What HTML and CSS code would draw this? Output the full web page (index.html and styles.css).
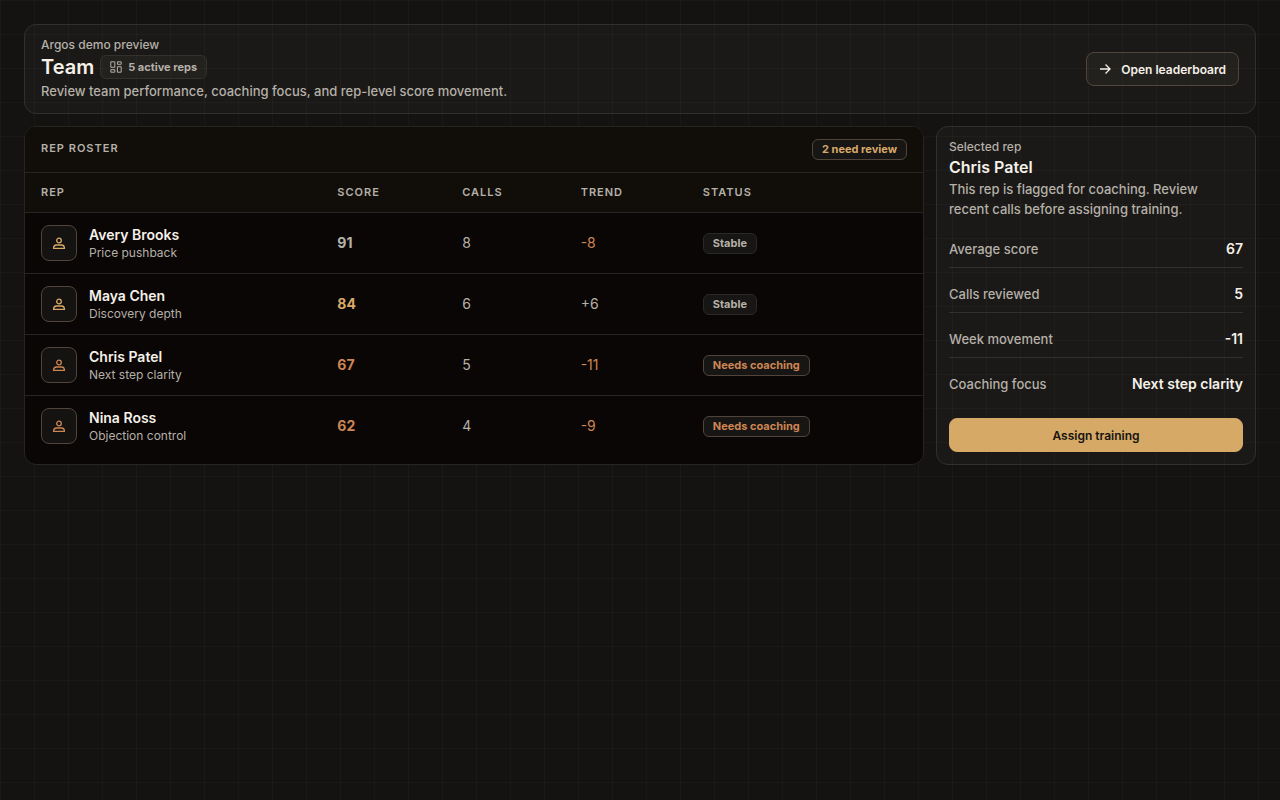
FILE: index.html
```html
<!DOCTYPE html>
<html lang="en">
<head>
  <meta charset="UTF-8" />
  <meta name="viewport" content="width=device-width, initial-scale=1.0" />
  <title>Team – Argos</title>
  <link rel="stylesheet" href="styles.css">
</head>
<body>
  <svg class="sprite" aria-hidden="true">
    <symbol id="icon-user" viewBox="0 0 14 14">
      <circle cx="7" cy="4.5" r="2.3" />
      <path d="M4.5 9h5c1.8 0 2.9 1 2.9 3.3H1.6C1.6 10 2.7 9 4.5 9z" />
    </symbol>
  </svg>

  <header class="card page-header">
    <div>
      <div class="eyebrow">Argos demo preview</div>
      <div class="title-row">
        <h1>Team</h1>
        <span class="count">
          <svg viewBox="0 0 12 12" width="12" height="12"><path d="M.8.8h4v5.500h-4zM7.400.8h3.800v2.500H7.400zM7.400 5.700h3.800v5.500H7.400zM.8 8.700h4v2.500h-4z" /></svg>
          5 active reps
        </span>
      </div>
      <p>Review team performance, coaching focus, and rep-level score movement.</p>
    </div>
    <button type="button" class="btn">
      <svg viewBox="0 0 12 12" width="12" height="12"><path d="M1 6h10M6.5 1.5L11 6l-4.500 4.500" /></svg>
      Open leaderboard
    </button>
  </header>

  <main class="layout">
    <section class="roster">
      <div class="roster-header">
        <h2>Rep roster</h2>
        <span class="badge gold">2 need review</span>
      </div>
      <table>
        <thead>
          <tr>
            <th class="col-rep">Rep</th>
            <th class="col-score">Score</th>
            <th class="col-calls">Calls</th>
            <th class="col-trend">Trend</th>
            <th>Status</th>
          </tr>
        </thead>
        <tbody>
          <tr>
            <td>
              <div class="rep">
                <span class="avatar gold"><svg width="14" height="14"><use href="#icon-user" /></svg></span>
                <div><div class="name">Avery Brooks</div><div class="focus">Price pushback</div></div>
              </div>
            </td>
            <td class="score">91</td>
            <td>8</td>
            <td class="orange">-8</td>
            <td><span class="badge stable">Stable</span></td>
          </tr>
          <tr>
            <td>
              <div class="rep">
                <span class="avatar gold"><svg width="14" height="14"><use href="#icon-user" /></svg></span>
                <div><div class="name">Maya Chen</div><div class="focus">Discovery depth</div></div>
              </div>
            </td>
            <td class="score gold">84</td>
            <td>6</td>
            <td>+6</td>
            <td><span class="badge stable">Stable</span></td>
          </tr>
          <tr>
            <td>
              <div class="rep">
                <span class="avatar orange"><svg width="14" height="14"><use href="#icon-user" /></svg></span>
                <div><div class="name">Chris Patel</div><div class="focus">Next step clarity</div></div>
              </div>
            </td>
            <td class="score orange">67</td>
            <td>5</td>
            <td class="orange">-11</td>
            <td><span class="badge orange">Needs coaching</span></td>
          </tr>
          <tr>
            <td>
              <div class="rep">
                <span class="avatar orange"><svg width="14" height="14"><use href="#icon-user" /></svg></span>
                <div><div class="name">Nina Ross</div><div class="focus">Objection control</div></div>
              </div>
            </td>
            <td class="score orange">62</td>
            <td>4</td>
            <td class="orange">-9</td>
            <td><span class="badge orange">Needs coaching</span></td>
          </tr>
        </tbody>
      </table>
    </section>

    <aside class="card detail">
      <div class="eyebrow">Selected rep</div>
      <h2>Chris Patel</h2>
      <p>This rep is flagged for coaching. Review recent calls before assigning training.</p>
      <dl>
        <div><dt>Average score</dt><dd>67</dd></div>
        <div><dt>Calls reviewed</dt><dd>5</dd></div>
        <div><dt>Week movement</dt><dd>-11</dd></div>
        <div><dt>Coaching focus</dt><dd>Next step clarity</dd></div>
      </dl>
      <button type="button" class="btn btn-primary">Assign training</button>
    </aside>
  </main>
</body>
</html>
```

FILE: styles.css
```css
* {
  box-sizing: border-box;
}
body {
  margin: 0;
  min-height: 100vh;
  padding: 24px;
  font-family: Inter, sans-serif;
  font-size: 14px;
  line-height: 20px;
  color: #b5b0a8;
  background-color: #141311;
  background-image:
    linear-gradient(to right, rgba(255,255,255,0.025) 1px, transparent 1px),
    linear-gradient(to bottom, rgba(255,255,255,0.025) 1px, transparent 1px);
  background-size: 34px 34px;
}
h1, h2, p, dl, dd {
  margin: 0;
}
svg {
  fill: none;
  stroke: currentColor;
  stroke-width: 1.3;
  flex: none;
}
.sprite {
  display: none;
}
.card {
  border: 1px solid #31302d;
  border-radius: 12px;
  background: rgba(255,255,255,0.028);
}
.card p,
dt {
  font-size: 13px;
  font-weight: 500;
}
.eyebrow {
  font-size: 12px;
  line-height: 16px;
  font-weight: 500;
}
.gold {
  color: #d9aa69;
}
.orange {
  color: #cd8554;
}

/* header */
.page-header {
  display: flex;
  align-items: center;
  justify-content: space-between;
  gap: 16px;
  padding: 12px 16px;
  margin-bottom: 12px;
}
.title-row {
  display: flex;
  align-items: center;
  gap: 6px;
}
h1 {
  font-size: 20px;
  line-height: 28px;
  font-weight: 600;
  color: #f5f0e8;
}
.count {
  display: inline-flex;
  align-items: center;
  gap: 6px;
  height: 24px;
  padding: 0 9px;
  border: 1px solid #34302c;
  border-radius: 6px;
  background: rgba(255,225,200,0.04);
  font-size: 11px;
  font-weight: 700;
}
.count svg {
  stroke-width: 1;
}
.btn {
  display: flex;
  align-items: center;
  justify-content: center;
  gap: 10px;
  height: 34px;
  padding: 0 12px;
  border: 1px solid #51443a;
  border-radius: 8px;
  background: rgba(255,225,200,0.04);
  color: #f5f0e8;
  font: 600 12px Inter, sans-serif;
  cursor: pointer;
}

/* roster and detail */
.layout {
  display: grid;
  grid-template-columns: minmax(0, 1fr) 320px;
  gap: 12px;
}
.roster {
  border: 1px solid #272522;
  border-radius: 12px;
  background: #0a0605;
  overflow: hidden;
}
.roster-header {
  display: flex;
  align-items: flex-start;
  justify-content: space-between;
  padding: 12px 16px;
  background: #110e0a;
}
.roster-header h2,
th {
  font-size: 11px;
  line-height: 18px;
  font-weight: 600;
  letter-spacing: 1px;
  text-transform: uppercase;
  color: #b5b0a8;
}
.badge {
  display: inline-block;
  padding: 0 9px;
  border: 1px solid #51443a;
  border-radius: 6px;
  background: #171614;
  font-size: 11px;
  line-height: 19px;
  font-weight: 700;
  vertical-align: middle;
}
.stable {
  border-color: #2b2927;
}
table {
  width: 100%;
  table-layout: fixed;
  border-collapse: separate;
  border-spacing: 0;
}
th {
  height: 41px;
  padding: 0 16px 2px;
  border-top: 1px solid #272522;
  border-bottom: 1px solid #272522;
  background: #110e0a;
  text-align: left;
}
td {
  height: 61px;
  padding: 0 16px;
  border-bottom: 1px solid #272522;
}
tr:last-child td {
  border-bottom-color: transparent;
}
.col-rep {
  width: 33%;
}
.col-score {
  width: 13.9%;
}
.col-calls {
  width: 13.2%;
}
.col-trend {
  width: 13.6%;
}
.rep {
  display: flex;
  align-items: center;
  gap: 12px;
}
.avatar {
  display: flex;
  align-items: center;
  justify-content: center;
  width: 36px;
  height: 36px;
  border: 1px solid #51443a;
  border-radius: 8px;
  background: #141311;
}
.name {
  font-weight: 600;
  color: #f5f0e8;
}
.focus {
  font-size: 12px;
  line-height: 16px;
}
.score {
  font-weight: 700;
}
.detail {
  padding: 12px;
}
.detail h2 {
  font-size: 16px;
  line-height: 24px;
  font-weight: 600;
  color: #f5f0e8;
}
.detail p {
  max-width: 280px;
}
.detail dl {
  display: grid;
  gap: 8px;
  margin: 12px 0 16px;
}
.detail dl div {
  display: flex;
  justify-content: space-between;
  padding: 8px 0;
  border-bottom: 1px solid #31302d;
}
.detail dl div:last-child {
  border-bottom: 0;
}
.detail dd {
  font-weight: 600;
  color: #f5f0e8;
}
.btn-primary {
  width: 100%;
  border-color: #d6a967;
  background: #d6a967;
  color: #171410;
}
```
